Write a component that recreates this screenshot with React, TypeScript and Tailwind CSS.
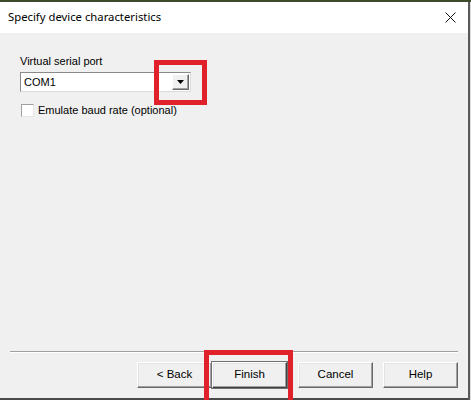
import React from "react";

function Btn({ label, def }: { label: string; def?: boolean }) {
  return (
    <div
      className={
        "w-[75px] h-[26px] flex items-center justify-center text-[11.5px] text-black bg-[#f0f0f0] border border-t-white border-l-white " +
        (def ? "border-r-[#404040] border-b-[#404040] outline outline-1 outline-[#707070]" : "border-r-[#696969] border-b-[#696969]")
      }
      style={{ boxShadow: "inset -1px -1px 0 #a0a0a0, inset 1px 1px 0 #e3e3e3" }}
    >
      {label}
    </div>
  );
}

export default function App() {
  return (
    <div
      className="w-[471px] h-[400px] flex flex-col bg-[#e9e9e9] relative overflow-hidden"
      style={{ fontFamily: '"Liberation Sans", Arial, sans-serif' }}
    >
      <div className="h-[2px] bg-[#3d4a2c] shrink-0" />
      <div className="flex flex-1 min-h-0">
        <div className="flex-1 flex flex-col border-r-2 border-[#5a5a5a]">
          {/* title bar */}
          <div className="h-[31px] bg-white flex items-center justify-between pl-[8px] pr-[12px] shrink-0">
            <span
              className="text-[11.3px] text-black"
              style={{ fontFamily: '"Noto Sans", "Open Sans", sans-serif' }}
            >
              Specify device characteristics
            </span>
            <svg width="11" height="11" viewBox="0 0 11 11">
              <path d="M0.5 0.5 L10.5 10.5 M10.5 0.5 L0.5 10.5" stroke="#111" strokeWidth="1" fill="none" />
            </svg>
          </div>
          {/* content */}
          <div className="flex-1 bg-[#f0f0f0] flex flex-col border-b-2 border-[#4a4a4a]">
            <div className="pl-[20px] pt-[21px] flex flex-col">
              <div className="text-[11px] text-black leading-[14px]">Virtual serial port</div>
              <div
                className="mt-[4px] w-[171px] h-[20px] bg-white flex items-center justify-between border border-t-[#8a8a8a] border-l-[#8a8a8a] border-r-[#dcdcdc] border-b-[#dcdcdc]"
              >
                <span className="pl-[3px] text-[11px] text-black">COM1</span>
                <div
                  className="w-[17px] h-[16px] mr-[1px] bg-[#f0f0f0] flex items-center justify-center border border-t-white border-l-white border-r-[#696969] border-b-[#696969]"
                  style={{ boxShadow: "inset -1px -1px 0 #a0a0a0" }}
                >
                  <svg width="7" height="4" viewBox="0 0 7 4">
                    <path d="M0 0 L7 0 L3.5 4 Z" fill="#000" />
                  </svg>
                </div>
              </div>
              <div className="mt-[10px] flex items-center gap-[4px]">
                <div className="w-[13px] h-[13px] bg-white border border-t-[#a0a0a0] border-l-[#a0a0a0] border-r-[#e8e8e8] border-b-[#e8e8e8] ml-[1px]" />
                <span className="text-[11px] text-black">Emulate baud rate (optional)</span>
              </div>
            </div>
            <div className="flex-1" />
            <div className="ml-[10px] mr-[10px] h-[2px] border-t border-t-[#a0a0a0] border-b border-b-white" />
            <div className="flex justify-end pr-[10px] pt-[9px] pb-[10px]">
              <Btn label="< Back" />
              <Btn label="Finish" def />
              <div className="w-[11px]" />
              <Btn label="Cancel" />
              <div className="w-[10px]" />
              <Btn label="Help" />
            </div>
          </div>
        </div>
        <div className="w-[1px] bg-[#dcdcdc]" />
      </div>
      {/* annotation boxes */}
      <div className="absolute left-[154px] top-[60px] w-[53px] h-[45px] border-[5px] border-[#e0202a]" />
      <div className="absolute left-[204px] top-[350px] w-[89px] h-[60px] border-[5px] border-[#e0202a]" />
    </div>
  );
}
